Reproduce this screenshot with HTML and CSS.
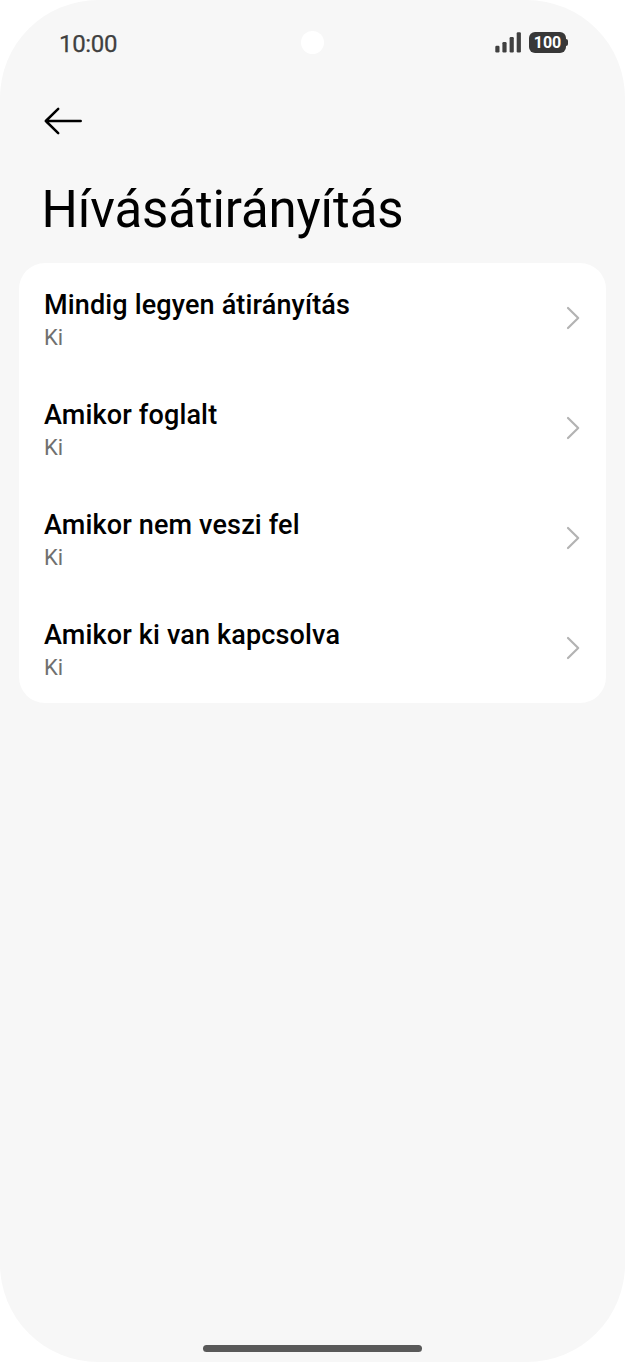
FILE: index.html
```html
<!DOCTYPE html>
<html lang="hu">
<head>
<meta charset="utf-8">
<title>Hívásátirányítás</title>
<link rel="stylesheet" href="styles.css">
</head>
<body>
<div class="phone">
  <header class="status">
    <span class="time">10:00</span>
    <span class="camera"></span>
    <div class="indicators">
      <svg class="signal" viewBox="0 0 27 21" width="27" height="21"><rect x="0.3" y="13.8" width="4.2" height="6.700" rx="1.200"/><rect x="7.400" y="10" width="4.200" height="10.500" rx="1.200"/><rect x="14.600" y="5" width="4.200" height="15.500" rx="1.200"/><rect x="21.700" y="0.300" width="4.200" height="20.200" rx="1.200"/></svg>
      <span class="battery">100</span>
    </div>
  </header>
  <nav class="toolbar">
    <svg width="38" height="28" viewBox="0 0 38 28" class="back"><path d="M14.200 1.800 1.800 14 14.200 26.200M1.800 14H36.700"/></svg>
  </nav>
  <h1 class="title">Hívásátirányítás</h1>
  <main class="card">
    <div class="row"><div class="text"><div class="label">Mindig legyen átirányítás</div><div class="value">Ki</div></div><svg class="chevron" width="14" height="24" viewBox="0 0 14 24"><path d="M2 2 12.200 12 2 22"/></svg></div>
    <div class="row"><div class="text"><div class="label">Amikor foglalt</div><div class="value">Ki</div></div><svg class="chevron" width="14" height="24" viewBox="0 0 14 24"><path d="M2 2 12.200 12 2 22"/></svg></div>
    <div class="row"><div class="text"><div class="label">Amikor nem veszi fel</div><div class="value">Ki</div></div><svg class="chevron" width="14" height="24" viewBox="0 0 14 24"><path d="M2 2 12.200 12 2 22"/></svg></div>
    <div class="row"><div class="text"><div class="label">Amikor ki van kapcsolva</div><div class="value">Ki</div></div><svg class="chevron" width="14" height="24" viewBox="0 0 14 24"><path d="M2 2 12.200 12 2 22"/></svg></div>
  </main>
  <div class="home"></div>
</div>
</body>
</html>
```
FILE: styles.css
```css
* { box-sizing: border-box; }
body { margin: 0; background: #fff; font-family: Roboto, sans-serif; color: #000; }
.phone { width: 625px; height: 1362px; background: #f7f7f7; border-radius: 98px; display: flex; flex-direction: column; overflow: hidden; }
.status { height: 86px; padding: 0 57px 1px 59px; display: grid; grid-template-columns: 241.5px 23px 1fr; align-items: center; color: #404040; }
.time { font-size: 24px; line-height: 28px; letter-spacing: -.35px; padding-top: 3px; -webkit-text-stroke: .25px #404040; }
.camera { width: 23px; height: 23px; border-radius: 50%; background: #fff; }
.indicators { display: flex; justify-content: flex-end; align-items: center; gap: 7px; }
.signal { fill: #404040; }
.battery { width: 37px; height: 21px; border-radius: 6px; background: #383838; color: #fff; font-size: 16px; font-weight: 700; line-height: 21px; text-align: center; position: relative; margin-right: 2px; }
.battery::after { content: ""; position: absolute; right: -2px; top: 7px; width: 2px; height: 7px; border-radius: 0 2px 2px 0; background: #383838; }
.toolbar { height: 71px; padding: 21.3px 44px 0; }
.back, .chevron { display: block; fill: none; stroke-linecap: round; stroke-linejoin: round; }
.back { stroke: #000; stroke-width: 2.5; }
.title { margin: 0; height: 105.5px; padding: 23px 41.5px 0; font-size: 51px; line-height: 60px; font-weight: 400; letter-spacing: -.12px; }
.card { width: 587px; margin-left: 19px; border-radius: 26px; background: #fff; flex: none; }
.row { height: 110.2px; display: flex; align-items: center; justify-content: space-between; padding: 0 26px 0 25px; }
.text { padding-top: 5px; }
.label { font-size: 27px; line-height: 34px; font-weight: 500; letter-spacing: .15px; }
.value { font-size: 22px; line-height: 31px; color: #707070; }
.chevron { stroke: #b3b3b3; stroke-width: 2.2; }
.home { width: 219px; height: 7px; border-radius: 4px; background: #595959; margin: auto 0 10px 203px; flex: none; }
```
